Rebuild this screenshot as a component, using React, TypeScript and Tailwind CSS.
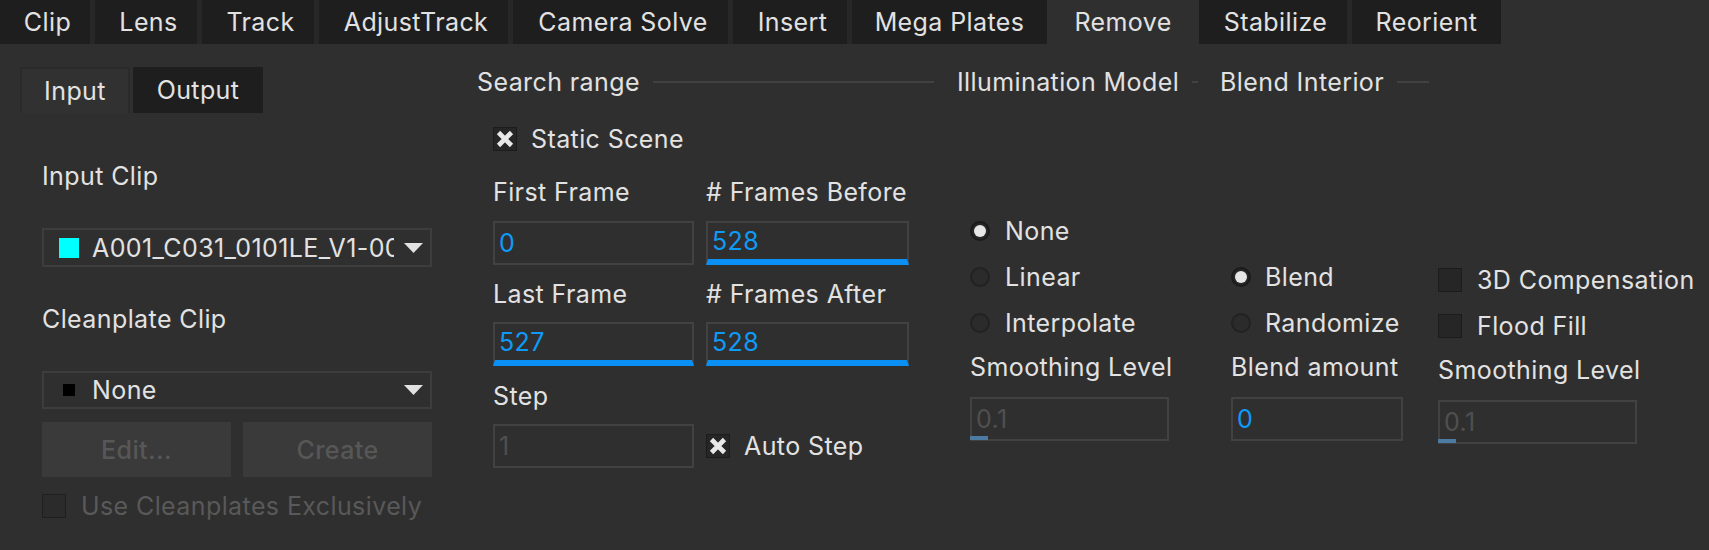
import React from "react";

const tabs: { label: string; w: string; active?: boolean; gap?: boolean }[] = [
  { label: "Clip", w: "w-[95px]", gap: true },
  { label: "Lens", w: "w-[107px]", gap: true },
  { label: "Track", w: "w-[117px]", gap: true },
  { label: "AdjustTrack", w: "w-[194px]", gap: true },
  { label: "Camera Solve", w: "w-[220px]", gap: true },
  { label: "Insert", w: "w-[119px]", gap: true },
  { label: "Mega Plates", w: "w-[195px]" },
  { label: "Remove", w: "w-[152px]", active: true },
  { label: "Stabilize", w: "w-[153px]", gap: true },
  { label: "Reorient", w: "w-[149px]" },
];

function Tab({ label, w, active, gap }: { label: string; w: string; active?: boolean; gap?: boolean }) {
  return (
    <div
      className={
        "h-full flex items-center justify-center whitespace-nowrap " +
        w +
        (active ? " bg-[#2f2f2f]" : " bg-[#1e1e1e]") +
        (gap ? " border-r-[5px] border-[#272727]" : "")
      }
    >
      <span className={gap ? "pl-[5px]" : ""}>{label}</span>
    </div>
  );
}

function CheckBox({ checked, disabled }: { checked?: boolean; disabled?: boolean }) {
  return (
    <div
      className={
        "w-[24px] h-[24px] shrink-0 flex items-center justify-center border " +
        (disabled ? "bg-[#2b2b2b] border-[#1f1f1f]" : "bg-[#262626] border-[#1c1c1c]")
      }
    >
      {checked && (
        <svg width="20" height="20" viewBox="0 0 20 20">
          <path d="M3.5 3.5 L16.5 16.5 M16.5 3.5 L3.5 16.5" stroke="#e8e8e8" strokeWidth="4.6" strokeLinecap="butt" />
        </svg>
      )}
    </div>
  );
}

function Radio({ checked }: { checked?: boolean }) {
  return (
    <div
      className={
        "w-[20px] h-[20px] rounded-full shrink-0 flex items-center justify-center border-2 " +
        (checked ? "bg-[#272727] border-[#1b1b1b]" : "bg-[#2b2b2b] border-[#222222]")
      }
    >
      {checked && <div className="w-[12px] h-[12px] rounded-full bg-[#e6e6e6]" />}
    </div>
  );
}

function Field({
  value,
  blue,
  underline,
  dim,
  slider,
}: {
  value: string;
  blue?: boolean;
  underline?: boolean;
  dim?: boolean;
  slider?: boolean;
}) {
  return (
    <div
      className={
        "relative h-[44px] w-full border-2 border-[#424242] flex items-center pl-[4px] " +
        (underline ? "border-b-[6px] border-b-[#0a8ff5]" : "")
      }
    >
      <span className={blue ? "text-[#0d9bf7]" : dim ? "text-[#4f4f4f]" : "text-[#e2e2e2]"}>{value}</span>
      {slider && <div className="absolute left-[-2px] bottom-[-1px] w-[18px] h-[4px] bg-[#4d7aa0]" />}
    </div>
  );
}

function Dropdown({ swatch, text }: { swatch: "cyan" | "black"; text: string }) {
  return (
    <div className="h-full w-full border-2 border-[#3d3d3d] flex items-center pl-[15px] pr-[7px]">
      <div className="w-[20px] h-[20px] flex items-center justify-center shrink-0">
        {swatch === "cyan" ? (
          <div className="w-[20px] h-[20px] bg-[#00ffff]" />
        ) : (
          <div className="w-[12px] h-[12px] bg-black" />
        )}
      </div>
      <div className="ml-[13px] w-[302px] overflow-hidden whitespace-nowrap">{text}</div>
      <div className="flex-1" />
      <svg width="19" height="10" viewBox="0 0 19 10">
        <path d="M0 0 L19 0 L9.5 10 Z" fill="#e2e2e2" />
      </svg>
    </div>
  );
}

function SectionTitle({ text, line }: { text: string; line: string }) {
  return (
    <div className="flex items-center">
      <span className="whitespace-nowrap">{text}</span>
      <div className={"ml-[13px] h-[2px] bg-[#414141] " + line} />
    </div>
  );
}

export default function App() {
  return (
    <div className="w-[1709px] h-[550px] bg-[#2f2f2f] text-[#e2e2e2] font-[Inter,sans-serif] text-[25px] tracking-[0.4px] leading-[30px] overflow-hidden">
      <div className="flex h-[44px]">
        {tabs.map((t) => (
          <Tab key={t.label} {...t} />
        ))}
      </div>

      <div className="flex">
        {/* Left column */}
        <div className="ml-[20px] w-[412px] pt-[23px] flex flex-col shrink-0">
          <div className="flex h-[46px]">
            <div className="w-[110px] bg-[#313131] border-2 border-b-0 border-[#2a2a2a] flex items-center justify-center">
              Input
            </div>
            <div className="ml-[3px] w-[130px] bg-[#1e1e1e] flex items-center justify-center">Output</div>
          </div>
          <div className="pl-[22px] flex flex-col">
            <div className="mt-[48px] h-[30px] flex items-center">Input Clip</div>
            <div className="mt-[37px] h-[39px]">
              <Dropdown swatch="cyan" text="A001_C031_0101LE_V1-001" />
            </div>
            <div className="mt-[37px] h-[30px] flex items-center">Cleanplate Clip</div>
            <div className="mt-[37px] h-[38px]">
              <Dropdown swatch="black" text="None" />
            </div>
            <div className="mt-[13px] h-[55px] grid grid-cols-2 gap-[12px]">
              <div className="bg-[#3a3a3a] flex items-center justify-center text-[#575757] font-medium">Edit...</div>
              <div className="bg-[#3a3a3a] flex items-center justify-center text-[#575757] font-medium">Create</div>
            </div>
            <div className="mt-[17px] h-[24px] flex items-center gap-[15px]">
              <CheckBox disabled />
              <span className="text-[#595959] whitespace-nowrap">Use Cleanplates Exclusively</span>
            </div>
          </div>
        </div>

        {/* Middle column */}
        <div className="ml-[45px] w-[457px] pt-[23px] shrink-0">
          <div className="h-[30px]">
            <SectionTitle text="Search range" line="flex-1" />
          </div>
          <div className="pl-[16px]">
            <div className="mt-[30px] h-[24px] flex items-center gap-[14px]">
              <CheckBox checked />
              <span>Static Scene</span>
            </div>
            <div className="mt-[26px] h-[30px] grid grid-cols-[201px_203px] gap-x-[12px] items-center whitespace-nowrap">
              <span>First Frame</span>
              <span># Frames Before</span>
            </div>
            <div className="mt-[14px] grid grid-cols-[201px_203px] gap-x-[12px]">
              <Field value="0" blue />
              <Field value="528" blue underline />
            </div>
            <div className="mt-[14px] h-[30px] grid grid-cols-[201px_203px] gap-x-[12px] items-center whitespace-nowrap">
              <span>Last Frame</span>
              <span># Frames After</span>
            </div>
            <div className="mt-[13px] grid grid-cols-[201px_203px] gap-x-[12px]">
              <Field value="527" blue underline />
              <Field value="528" blue underline />
            </div>
            <div className="mt-[15px] h-[30px] flex items-center">Step</div>
            <div className="mt-[13px] grid grid-cols-[201px_203px] gap-x-[12px]">
              <Field value="1" dim />
              <div className="flex items-center gap-[14px]">
                <CheckBox checked />
                <span>Auto Step</span>
              </div>
            </div>
          </div>
        </div>

        {/* Right block */}
        <div className="ml-[23px] pt-[23px] shrink-0">
          <div className="h-[30px] flex items-center">
            <SectionTitle text="Illumination Model" line="w-[6px]" />
            <div className="ml-[22px]">
              <SectionTitle text="Blend Interior" line="w-[32px]" />
            </div>
          </div>
          <div className="pl-[13px] flex">
            <div className="w-[199px] mt-[119px] flex flex-col">
              <div className="h-[30px] flex items-center gap-[15px]">
                <Radio checked />
                <span>None</span>
              </div>
              <div className="mt-[16px] h-[30px] flex items-center gap-[15px]">
                <Radio />
                <span>Linear</span>
              </div>
              <div className="mt-[16px] h-[30px] flex items-center gap-[15px]">
                <Radio />
                <span>Interpolate</span>
              </div>
              <div className="mt-[14px] h-[30px] flex items-center whitespace-nowrap">Smoothing Level</div>
              <div className="mt-[15px]">
                <Field value="0.1" dim slider />
              </div>
            </div>
            <div className="ml-[62px] w-[172px] mt-[119px] flex flex-col">
              <div className="h-[30px]" />
              <div className="mt-[16px] h-[30px] flex items-center gap-[14px]">
                <Radio checked />
                <span>Blend</span>
              </div>
              <div className="mt-[16px] h-[30px] flex items-center gap-[14px]">
                <Radio />
                <span>Randomize</span>
              </div>
              <div className="mt-[14px] h-[30px] flex items-center whitespace-nowrap">Blend amount</div>
              <div className="mt-[15px]">
                <Field value="0" blue />
              </div>
            </div>
            <div className="ml-[35px] w-[199px] mt-[122px] flex flex-col">
              <div className="h-[30px]" />
              <div className="mt-[16px] h-[30px] flex items-center gap-[15px]">
                <CheckBox />
                <span className="whitespace-nowrap">3D Compensation</span>
              </div>
              <div className="mt-[16px] h-[30px] flex items-center gap-[15px]">
                <CheckBox />
                <span>Flood Fill</span>
              </div>
              <div className="mt-[14px] h-[30px] flex items-center whitespace-nowrap">Smoothing Level</div>
              <div className="mt-[15px]">
                <Field value="0.1" dim slider />
              </div>
            </div>
          </div>
        </div>
      </div>
    </div>
  );
}
